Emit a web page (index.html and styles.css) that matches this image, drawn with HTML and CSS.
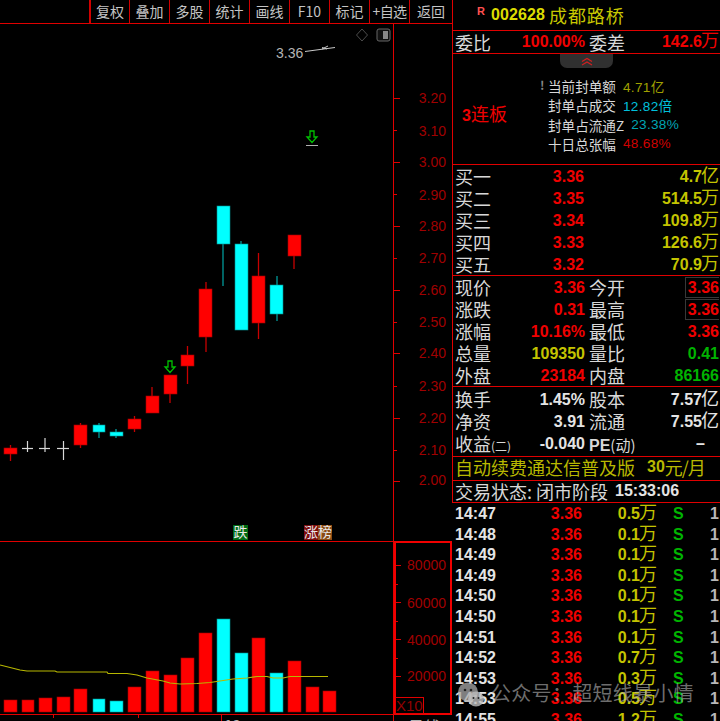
FILE: index.html
```html
<!DOCTYPE html>
<html lang="zh">
<head>
<meta charset="utf-8">
<title>002628 成都路桥</title>
<link rel="stylesheet" href="styles.css">
</head>
<body>
<div class="app">
  <div class="left">
    <div class="toolbar">
      <div class="tool first">复权</div>
      <div class="tool">叠加</div>
      <div class="tool">多股</div>
      <div class="tool">统计</div>
      <div class="tool">画线</div>
      <div class="tool">F10</div>
      <div class="tool">标记</div>
      <div class="tool tight">+自选</div>
      <div class="tool last">返回</div>
    </div>
    <svg class="chart" width="452" height="697" viewBox="0 24 452 697">
      <g class="frame">
        <line x1="393.5" y1="24" x2="393.5" y2="721"/>
        <line x1="0" y1="541.5" x2="393" y2="541.5"/>
        <line x1="0" y1="714.5" x2="395" y2="714.5"/>
        <rect class="box" x="395" y="542" width="56" height="172"/>
        <rect x="395.5" y="697.5" width="28" height="16"/>
        <line x1="53.5" y1="714" x2="53.5" y2="718"/>
        <line x1="138.5" y1="714" x2="138.5" y2="718"/>
        <line x1="221.5" y1="714" x2="221.5" y2="721"/>
      </g>
      <g class="frame">
        <line x1="394" y1="98.5" x2="400" y2="98.5"/>
        <line x1="394" y1="130.5" x2="397" y2="130.5"/>
        <line x1="394" y1="162.5" x2="400" y2="162.5"/>
        <line x1="394" y1="194.5" x2="397" y2="194.5"/>
        <line x1="394" y1="226.5" x2="400" y2="226.5"/>
        <line x1="394" y1="258.5" x2="397" y2="258.5"/>
        <line x1="394" y1="290.5" x2="400" y2="290.5"/>
        <line x1="394" y1="322.5" x2="397" y2="322.5"/>
        <line x1="394" y1="353.5" x2="400" y2="353.5"/>
        <line x1="394" y1="386.5" x2="397" y2="386.5"/>
        <line x1="394" y1="418.5" x2="400" y2="418.5"/>
        <line x1="394" y1="450.5" x2="397" y2="450.5"/>
        <line x1="394" y1="481.5" x2="400" y2="481.5"/>
        <line x1="396" y1="565.5" x2="401" y2="565.5"/>
        <line x1="396" y1="584.5" x2="398" y2="584.5"/>
        <line x1="396" y1="602.5" x2="401" y2="602.5"/>
        <line x1="396" y1="621.5" x2="398" y2="621.5"/>
        <line x1="396" y1="639.5" x2="401" y2="639.5"/>
        <line x1="396" y1="658.5" x2="398" y2="658.5"/>
        <line x1="396" y1="676.5" x2="401" y2="676.5"/>
      </g>
      <g class="axis">
        <text x="446" y="103">3.20</text>
        <text x="446" y="136">3.10</text>
        <text x="446" y="167">3.00</text>
        <text x="446" y="200">2.90</text>
        <text x="446" y="231">2.80</text>
        <text x="446" y="263">2.70</text>
        <text x="446" y="295">2.60</text>
        <text x="446" y="327">2.50</text>
        <text x="446" y="358">2.40</text>
        <text x="446" y="391">2.30</text>
        <text x="446" y="423">2.20</text>
        <text x="446" y="455">2.10</text>
        <text x="446" y="485">2.00</text>
        <text x="446" y="570">80000</text>
        <text x="446" y="608">60000</text>
        <text x="446" y="645">40000</text>
        <text x="446" y="681">20000</text>
        <text x="396" y="711" class="x10">X10</text>
      </g>

      <g class="wick-up">
        <line x1="10.5" y1="445" x2="10.5" y2="461"/>
        <line x1="80.5" y1="423" x2="80.5" y2="448"/>
        <line x1="134.5" y1="416" x2="134.5" y2="432"/>
        <line x1="152" y1="387" x2="152" y2="396"/>
        <line x1="170" y1="394" x2="170" y2="403"/>
        <line x1="187.5" y1="346" x2="187.5" y2="384"/>
        <line x1="206" y1="282" x2="206" y2="352"/>
        <line x1="258.5" y1="253" x2="258.5" y2="339"/>
        <line x1="294" y1="256" x2="294" y2="269"/>
      </g>
      <g class="wick-down">
        <line x1="99" y1="423" x2="99" y2="438"/>
        <line x1="116" y1="429" x2="116" y2="438"/>
        <line x1="223" y1="244" x2="223" y2="286"/>
        <line x1="241" y1="241" x2="241" y2="244"/>
        <line x1="277" y1="276" x2="277" y2="321"/>
      </g>
      <g class="wick-flat">
        <line x1="27.5" y1="441" x2="27.5" y2="452"/>
        <line x1="45" y1="438" x2="45" y2="452"/>
        <line x1="63.5" y1="441" x2="63.5" y2="460"/>
        <line x1="22" y1="448.5" x2="33" y2="448.5"/>
        <line x1="39" y1="448.5" x2="50" y2="448.5"/>
        <line x1="57" y1="448.5" x2="69" y2="448.5"/>
      </g>
      <g class="up">
        <rect x="4" y="448" width="13" height="6"/>
        <rect x="74" y="425" width="13" height="20"/>
        <rect x="128" y="419" width="13" height="10"/>
        <rect x="146" y="396" width="13" height="17"/>
        <rect x="164" y="375" width="13" height="19"/>
        <rect x="181" y="355" width="13" height="11"/>
        <rect x="199" y="289" width="13" height="48"/>
        <rect x="252" y="276" width="13" height="47"/>
        <rect x="288" y="235" width="13" height="21"/>
      </g>
      <g class="down">
        <rect x="93" y="425" width="12" height="7"/>
        <rect x="110" y="432" width="13" height="4"/>
        <rect x="217" y="206" width="13" height="38"/>
        <rect x="235" y="244" width="13" height="86"/>
        <rect x="270" y="285" width="13" height="29"/>
      </g>

      <g class="up">
        <rect x="4" y="700" width="13" height="12"/>
        <rect x="22" y="700" width="12" height="12"/>
        <rect x="39" y="698" width="13" height="14"/>
        <rect x="57" y="697" width="13" height="15"/>
        <rect x="74" y="689" width="13" height="23"/>
        <rect x="128" y="687" width="13" height="25"/>
        <rect x="146" y="671" width="13" height="41"/>
        <rect x="164" y="675" width="13" height="37"/>
        <rect x="181" y="658" width="13" height="54"/>
        <rect x="199" y="633" width="13" height="79"/>
        <rect x="252" y="638" width="13" height="74"/>
        <rect x="288" y="661" width="13" height="51"/>
        <rect x="306" y="687" width="13" height="25"/>
        <rect x="323" y="691" width="13" height="21"/>
      </g>
      <g class="down">
        <rect x="93" y="699" width="12" height="13"/>
        <rect x="110" y="701" width="13" height="11"/>
        <rect x="217" y="619" width="13" height="93"/>
        <rect x="235" y="653" width="13" height="59"/>
        <rect x="270" y="673" width="13" height="39"/>
      </g>
      <polyline class="ma" points="0,665 20,670 27,671 55,671 57,672 107,672 108,673.5 127,673.5 137,675 147,678 163,681 170,683 180,684 197,683.5 210,682.5 220,681 233,679 247,678 257,676.5 267,676.5 273,678 283,678 290,676.5 328,676.5"/>

      <path class="mark" d="M168 361h4v6h3l-5 5.500l-5-5.500h3z"/>
      <path class="mark" d="M310 131h4v6h3l-5 5.500l-5-5.500h3z"/>
      <line class="under" x1="306" y1="145.500" x2="318" y2="145.500"/>

      <text class="price" x="276" y="58">3.36</text>
      <path class="pointer" d="M305 51.500L335 47.500M322 49l6-3M322 47.500l5 1.500"/>
      <path class="diamond" d="M362 29l5.500 6l-5.500 6l-5.500-6z"/>
      <rect class="iconbox" x="377" y="29" width="13" height="12" rx="2"/>
      <rect class="iconfill" x="383" y="31" width="5" height="8"/>

      <rect class="tag-g" x="233" y="525" width="15" height="15"/>
      <rect class="tag-r" x="304" y="525" width="14" height="15"/>
      <rect class="tag-b" x="318" y="525" width="14" height="15"/>
      <text class="tag" x="233.500" y="537">跌</text>
      <text class="tag" x="304" y="537">涨榜</text>

      <text class="date" x="224" y="730">10</text>
      <text class="dayline" x="408" y="733">日线</text>
    </svg>
  </div>

  <div class="right">
    <div class="sec head">
      <span class="r-mark">R</span>
      <span class="code">002628</span>
      <span class="name">成都路桥</span>
    </div>
    <div class="sec ratio">
      <span class="lab">委比</span><span class="num red">100.00%</span><span class="lab lab2">委差</span><span class="num red">142.6<i class="cjk">万</i></span>
    </div>
    <div class="sec limit">
      <div class="pill"><svg width="14" height="9" viewBox="0 0 14 9"><path class="chev" d="M2 4.500L7 1.500L12 4.500M2 8L7 5L12 8"/></svg></div>
      <div class="streak"><b>3</b>连板</div>
      <div class="facts">
        <div class="fact"><span class="pin">!</span><span class="ftext">当前封单额</span><span class="fval olive">4.71亿</span></div>
        <div class="fact"><span class="ftext">封单占成交</span><span class="fval cyan">12.82倍</span></div>
        <div class="fact"><span class="ftext">封单占流通Z</span><span class="fval teal">23.38%</span></div>
        <div class="fact"><span class="ftext">十日总张幅</span><span class="fval dimred">48.68%</span></div>
      </div>
    </div>
    <div class="sec book">
      <div class="brow"><span class="lab">买一</span><span class="num red">3.36</span><span class="num yellow">4.7<i class="cjk">亿</i></span></div>
      <div class="brow"><span class="lab">买二</span><span class="num red">3.35</span><span class="num yellow">514.5<i class="cjk">万</i></span></div>
      <div class="brow"><span class="lab">买三</span><span class="num red">3.34</span><span class="num yellow">109.8<i class="cjk">万</i></span></div>
      <div class="brow"><span class="lab">买四</span><span class="num red">3.33</span><span class="num yellow">126.6<i class="cjk">万</i></span></div>
      <div class="brow"><span class="lab">买五</span><span class="num red">3.32</span><span class="num yellow">70.9<i class="cjk">万</i></span></div>
    </div>
    <div class="sec quote">
      <div class="qrow"><span class="lab">现价</span><span class="num red">3.36</span><span class="lab lab2">今开</span><span class="num red"><em class="boxed">3.36</em></span></div>
      <div class="qrow"><span class="lab">涨跌</span><span class="num red">0.31</span><span class="lab lab2">最高</span><span class="num red"><em class="boxed">3.36</em></span></div>
      <div class="qrow"><span class="lab">涨幅</span><span class="num red">10.16%</span><span class="lab lab2">最低</span><span class="num red">3.36</span></div>
      <div class="qrow"><span class="lab">总量</span><span class="num yellow">109350</span><span class="lab lab2">量比</span><span class="num green">0.41</span></div>
      <div class="qrow"><span class="lab">外盘</span><span class="num red">23184</span><span class="lab lab2">内盘</span><span class="num green">86166</span></div>
    </div>
    <div class="sec fund">
      <div class="qrow"><span class="lab">换手</span><span class="num white">1.45%</span><span class="lab lab2">股本</span><span class="num white">7.57<i class="cjk">亿</i></span></div>
      <div class="qrow"><span class="lab">净资</span><span class="num white">3.91</span><span class="lab lab2">流通</span><span class="num white">7.55<i class="cjk">亿</i></span></div>
      <div class="qrow"><span class="lab nowrap">收益<i class="paren">(二)</i></span><span class="num white">-0.040</span><span class="lab lab2 nowrap pe"><b>PE</b><i class="paren-lg">(动)</i></span><span class="num white dash">–</span></div>
    </div>
    <div class="sec banner"><span>自动续费通达信普及版</span><b>30</b><span class="per">元/月</span></div>
    <div class="sec status"><span>交易状态: 闭市阶段</span><b>15:33:06</b></div>
    <div class="ticks">
      <div class="trow"><span class="white">14:47</span><span class="red">3.36</span><span class="yellow">0.5<i class="cjk">万</i></span><span class="green">S</span><span class="gray">1</span></div>
      <div class="trow"><span class="white">14:48</span><span class="red">3.36</span><span class="yellow">0.1<i class="cjk">万</i></span><span class="green">S</span><span class="gray">1</span></div>
      <div class="trow"><span class="white">14:49</span><span class="red">3.36</span><span class="yellow">0.1<i class="cjk">万</i></span><span class="green">S</span><span class="gray">1</span></div>
      <div class="trow"><span class="white">14:49</span><span class="red">3.36</span><span class="yellow">0.1<i class="cjk">万</i></span><span class="green">S</span><span class="gray">1</span></div>
      <div class="trow"><span class="white">14:50</span><span class="red">3.36</span><span class="yellow">0.1<i class="cjk">万</i></span><span class="green">S</span><span class="gray">1</span></div>
      <div class="trow"><span class="white">14:50</span><span class="red">3.36</span><span class="yellow">0.1<i class="cjk">万</i></span><span class="green">S</span><span class="gray">1</span></div>
      <div class="trow"><span class="white">14:51</span><span class="red">3.36</span><span class="yellow">0.1<i class="cjk">万</i></span><span class="green">S</span><span class="gray">1</span></div>
      <div class="trow"><span class="white">14:52</span><span class="red">3.36</span><span class="yellow">0.7<i class="cjk">万</i></span><span class="green">S</span><span class="gray">1</span></div>
      <div class="trow"><span class="white">14:53</span><span class="red">3.36</span><span class="yellow">0.3<i class="cjk">万</i></span><span class="green">S</span><span class="gray">1</span></div>
      <div class="trow"><span class="white">14:53</span><span class="red">3.36</span><span class="yellow">0.5<i class="cjk">万</i></span><span class="green">S</span><span class="gray">1</span></div>
      <div class="trow"><span class="white">14:55</span><span class="red">3.36</span><span class="yellow">1.2<i class="cjk">万</i></span><span class="green">S</span><span class="gray">1</span></div>
    </div>
    <div class="watermark">
      <svg class="wm-icon" width="26" height="25" viewBox="0 0 26 25"><ellipse class="wm-a" cx="10" cy="10" rx="10" ry="9.500"/><ellipse class="wm-b" cx="18" cy="17" rx="8" ry="7.500"/><circle class="wm-dot" cx="7" cy="8" r="1.300"/><circle class="wm-dot" cx="13" cy="8" r="1.300"/><circle class="wm-dot" cx="15.500" cy="16" r="1"/><circle class="wm-dot" cx="20.500" cy="16" r="1"/></svg>
      <span>公众号：超短线暴小情</span>
    </div>
  </div>
</div>
</body>
</html>
```

FILE: styles.css
```css
* { box-sizing: border-box; margin: 0; padding: 0; }
html, body { width: 720px; height: 721px; overflow: hidden; background: #000; }
body { font-family: "Noto Sans CJK SC", "Liberation Sans", sans-serif; color: #d8d8d8; }
i, em { font-style: normal; }

.app { display: flex; width: 720px; height: 721px; position: relative; overflow: hidden; }
.left { width: 452px; flex: none; display: flex; flex-direction: column; }
.right { width: 268px; flex: none; display: flex; flex-direction: column; position: relative; }

.toolbar { height: 24px; flex: none; display: flex; justify-content: flex-end; border-bottom: 1px solid #e00000; }
.tool { width: 40px; border-left: 1px solid #d00000; text-align: center; font-size: 14px; line-height: 23px; color: #c4c4c4; letter-spacing: 0; font-family: "Noto Sans CJK SC", sans-serif; }
.tool.first { border-left-width: 2px; }
.tool.last { width: 43px; }
.tool.tight { white-space: nowrap; letter-spacing: -.6px; }

.chart { display: block; overflow: visible; flex: none; }
.frame line, .frame rect { stroke: #e00000; stroke-width: 1; fill: none; }
.frame .box { stroke-width: 2; stroke: #f00000; }
.axis text { font: 14px "Liberation Sans", sans-serif; fill: #a00000; text-anchor: end; }
.axis text.x10 { text-anchor: start; fill: #900000; font-size: 15px; }
.up rect { fill: #ff0000; stroke: #a00000; stroke-width: .6; }
.down rect { fill: #00ffff; stroke: #009090; stroke-width: .6; }
.wick-up line { stroke: #c80000; stroke-width: 1.300; }
.wick-down line { stroke: #009a9a; stroke-width: 1.300; }
.wick-flat line { stroke: #d8d8d8; stroke-width: 1.200; }
.ma { fill: none; stroke: #b8b800; stroke-width: 1.200; }
.mark { fill: none; stroke: #00c000; stroke-width: 1.300; }
.under { stroke: #b0b0b0; stroke-width: 1; }
.price { font: 14px "Liberation Sans", sans-serif; fill: #b4b4b4; }
.pointer { fill: none; stroke: #c8c8c8; stroke-width: 1; }
.diamond { fill: none; stroke: #4c4c4c; stroke-width: 1; }
.iconbox { fill: #111; stroke: #666; stroke-width: 1; }
.iconfill { fill: #888; }
.tag-g { fill: #006a14; }
.tag-r { fill: #7c0c0c; }
.tag-b { fill: #8a4a14; }
.tag { font: 14px "Noto Sans CJK SC", sans-serif; fill: #e8e8e8; }
.date { font: bold 15px "Liberation Sans", sans-serif; fill: #b0b0b0; }
.dayline { font: 16px "Noto Sans CJK SC", sans-serif; fill: #b0b0b0; }

.sec { flex: none; border-left: 1px solid #e00000; border-bottom: 1px solid #e00000; }
.lab { font-size: 18px; line-height: 22px; color: #d8d8d8; }
.lab2 { padding-left: 4px; }
.nowrap { white-space: nowrap; }
.num { font: bold 16px/22px "Liberation Sans", sans-serif; text-align: right; white-space: nowrap; padding-top: 1px; }
.cjk { font: 400 18px/0 "Noto Sans CJK SC", sans-serif; margin-left: -1px; }
.paren { font-size: 12px; line-height: 0; }
.pe b { font: bold 16px/0 "Liberation Sans", sans-serif; }
.paren-lg { font-size: 15px; line-height: 0; }
.dash { padding-right: 14px; color: #a8a8a8; }
.red { color: #f00000; }
.yellow { color: #c4c400; }
.green { color: #00b400; }
.white { color: #e4e4e4; }
.gray { color: #b8b8b8; }

.head { height: 31px; display: flex; align-items: center; padding-left: 24px; }
.r-mark { font: bold 11px "Liberation Sans", sans-serif; color: #ff5050; width: 14px; align-self: flex-start; margin-top: 5px; }
.code { font: bold 16px "Liberation Sans", sans-serif; color: #dcdc00; letter-spacing: .1px; margin-right: 4px; }
.name { font-size: 18px; color: #c8c800; letter-spacing: .9px; }

.ratio { height: 23px; display: grid; grid-template-columns: 36px 94px 40px 1fr; padding: 0 1px 4px 2px; align-items: center; }
.ratio .num { padding-top: 0; }

.limit { height: 111px; display: flex; align-items: center; position: relative; padding-left: 9px; }
.pill { position: absolute; left: 107px; top: 0; width: 53px; height: 14px; background: #303030; border-radius: 0 0 7px 7px; display: flex; justify-content: center; align-items: center; }
.chev { fill: none; stroke: #d02020; stroke-width: 1.200; }
.streak { width: 86px; font-size: 18px; color: #f00000; margin-top: 7px; white-space: nowrap; }
.streak b { font: bold 16px "Liberation Sans", sans-serif; }
.facts { display: flex; flex-direction: column; gap: 0; margin-top: 12px; }
.fact { height: 19.300px; display: flex; align-items: center; position: relative; }
.ftext { font-size: 13.600px; color: #d8d8d8; }
.fval { font: 13.600px "Liberation Sans", "Noto Sans CJK SC", sans-serif; margin-left: 7px; letter-spacing: .3px; }
.pin { position: absolute; left: -8px; top: 0; font-size: 12px; font-weight: 700; color: #888; }
.olive { color: #a0a000; }
.cyan { color: #00c0dc; }
.teal { color: #00a4b4; }
.dimred { color: #d00000; }

.book { height: 111px; }
.brow { height: 22px; display: grid; grid-template-columns: 36px 93px 1fr; padding: 0 1px 0 2px; }
.quote { height: 111px; }
.qrow { height: 22px; display: grid; grid-template-columns: 36px 94px 40px 1fr; padding: 0 1px 0 2px; }
.boxed { display: inline-block; height: 21px; line-height: 20px; padding: 0 0 0 2px; border: 1px solid #383838; border-right: 0; }
.fund { height: 70px; padding-top: 1px; }

.banner { height: 24px; display: flex; align-items: center; padding: 0 0 3px 2px; font-size: 18px; color: #b8b800; white-space: nowrap; }
.banner b { font: bold 16px "Liberation Sans", sans-serif; margin-left: 12px; }
.per { letter-spacing: -1px; }
.status { height: 22px; display: flex; align-items: center; padding: 0 0 1px 2px; font-size: 18px; color: #d8d8d8; white-space: nowrap; }
.status b { font: bold 16px "Liberation Sans", sans-serif; margin-left: 7px; color: #e4e4e4; }

.ticks { padding: 1px 1px 0 3px; }
.trow { height: 20.600px; display: grid; grid-template-columns: 40px 87px 75px 30px 1fr; font: bold 16px/20px "Liberation Sans", sans-serif; }
.trow span:nth-child(2), .trow span:nth-child(3), .trow span:nth-child(5) { text-align: right; }
.trow span:nth-child(4) { padding-left: 16px; }

.watermark { position: absolute; left: 6px; top: 677px; display: flex; align-items: center; gap: 7px; color: rgba(185,185,185,.6); font: 20px/29px "Noto Sans CJK TC", sans-serif; letter-spacing: .3px; white-space: nowrap; }
.wm-icon { margin-top: 5px; flex: none; }
.wm-a { fill: rgba(170,170,170,.75); }
.wm-b { fill: rgba(190,190,190,.8); }
.wm-dot { fill: #222; }
```
